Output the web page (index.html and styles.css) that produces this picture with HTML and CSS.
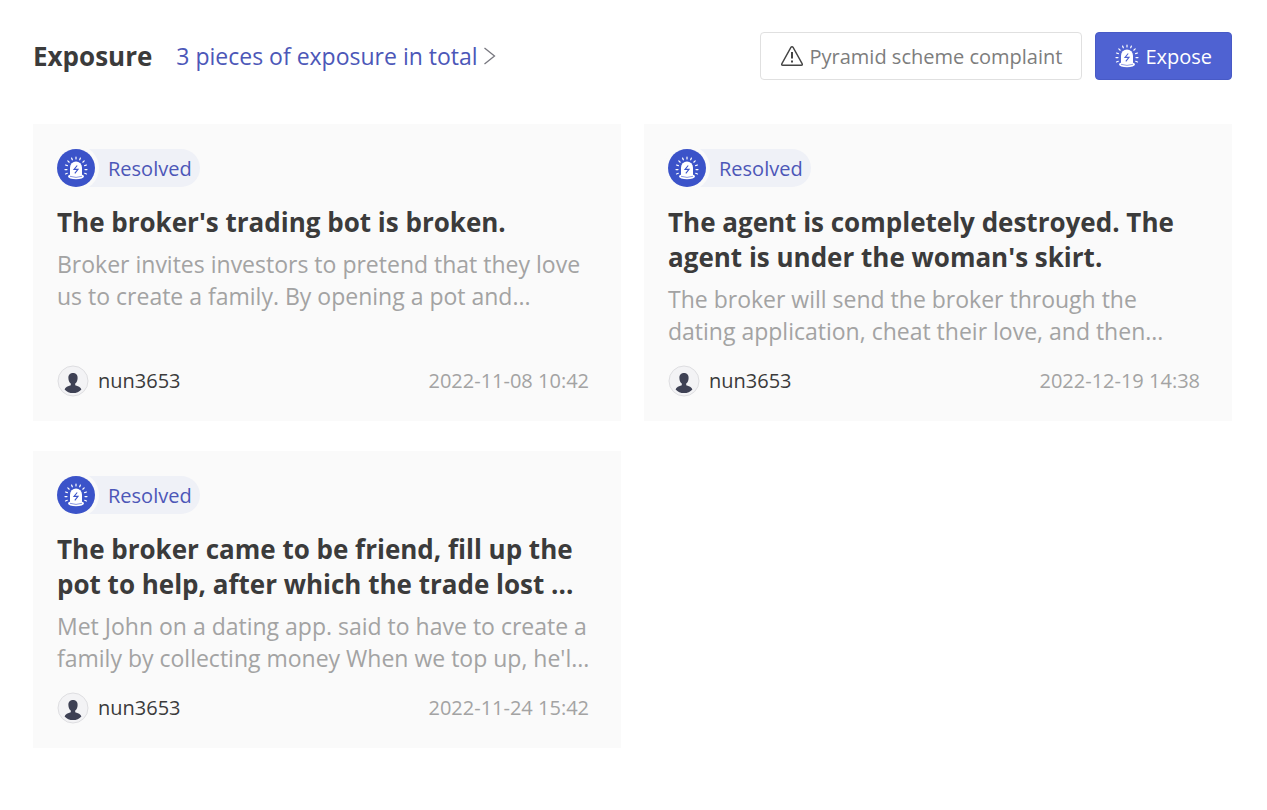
FILE: index.html
```
<!DOCTYPE html>
<html lang="en">
<head>
  <meta charset="UTF-8">
  <meta name="viewport" content="width=device-width, initial-scale=1">
  <title>Exposure</title>
  <link rel="stylesheet" href="styles.css">
</head>
<body>
  <svg class="sprite" aria-hidden="true">
    <symbol id="siren" viewBox="0 0 24 24">
      <path d="M6 19.5V11.500a6 6 0 0 1 12 0v8z" fill="currentColor"/>
      <ellipse cx="12" cy="20.500" rx="8" ry="2.700" fill="currentColor"/>
      <path d="M6 20.300q6 2.200 12 0" fill="none" stroke="var(--siren-bg)" stroke-width=".6"/>
      <path d="M13.200 9.500l-3.200 3.900h4l-3.200 3.900" fill="none" stroke="var(--siren-bg)" stroke-width="1.100"/>
      <path d="M12 1v2M7.600 2l.7 1.800M16.400 2l-.7 1.800M3.800 4.900l1.400 1.300M20.200 4.900l-1.400 1.300M1.500 9l1.900.6M22.500 9l-1.900.6M1 13.600h2M23 13.600h-2M1.500 18l1.800-.7M22.500 18l-1.800-.7" fill="none" stroke="currentColor" stroke-width="1.200" stroke-linecap="round"/>
    </symbol>
    <symbol id="person" viewBox="0 0 32 32">
      <circle cx="16" cy="16" r="15" fill="#f3f3f5" stroke="#dedee1"/>
      <path d="M16 8c3.100 0 4.800 2.200 4.600 5.200-.1 2.300-1 4.300-2.400 5.400v1.600c2.800.9 5.600 1.800 6.200 4.200-2.100 2.400-5 3.600-8.400 3.600s-6.300-1.200-8.400-3.600c.6-2.400 3.400-3.300 6.200-4.200v-1.600c-1.400-1.100-2.300-3.100-2.400-5.400C11.200 10.200 12.900 8 16 8z" fill="#3e4154"/>
    </symbol>
  </svg>

  <section class="exposure">
    <header class="top">
      <h1>Exposure</h1>
      <a class="total" href="#">3 pieces of exposure in total
        <svg width="13" height="20" viewBox="0 0 13 20" fill="none" stroke="#77777f" stroke-width="1.3"><path d="M1.500 2l10 8-10 8"/></svg>
      </a>
      <div class="actions">
        <button class="btn">
          <svg width="24" height="22" viewBox="0 0 24 22" fill="none" stroke="#444" stroke-width="1.4" stroke-linejoin="round"><path d="M12 1.700q.7 0 1.100.7l9 16.200q.8 1.700-.9 1.700H2.800q-1.700 0-.9-1.700l9-16.200q.4-.7 1.100-.7z"/><path d="M12 7v6.500M12 15.500v2" stroke-width="2"/></svg>
          Pyramid scheme complaint
        </button>
        <button class="btn primary">
          <svg width="24" height="24"><use href="#siren"/></svg>
          Expose
        </button>
      </div>
    </header>

    <div class="cards">
      <article class="card">
        <div class="badge"><span class="dot"><svg width="24" height="24"><use href="#siren"/></svg></span>Resolved</div>
        <h2>The broker's trading bot is broken.</h2>
        <p>Broker invites investors to pretend that they love us to create a family. By opening a pot and...</p>
        <footer>
          <svg width="32" height="32"><use href="#person"/></svg>
          <span class="user">nun3653</span>
          <time>2022-11-08 10:42</time>
        </footer>
      </article>

      <article class="card">
        <div class="badge"><span class="dot"><svg width="24" height="24"><use href="#siren"/></svg></span>Resolved</div>
        <h2>The agent is completely destroyed. The agent is under the woman's skirt.</h2>
        <p>The broker will send the broker through the dating application, cheat their love, and then...</p>
        <footer>
          <svg width="32" height="32"><use href="#person"/></svg>
          <span class="user">nun3653</span>
          <time>2022-12-19 14:38</time>
        </footer>
      </article>

      <article class="card">
        <div class="badge"><span class="dot"><svg width="24" height="24"><use href="#siren"/></svg></span>Resolved</div>
        <h2>The broker came to be friend, fill up the pot to help, after which the trade lost ...</h2>
        <p>Met John on a dating app. said to have to create a family by collecting money When we top up, he'l...</p>
        <footer>
          <svg width="32" height="32"><use href="#person"/></svg>
          <span class="user">nun3653</span>
          <time>2022-11-24 15:42</time>
        </footer>
      </article>
    </div>
  </section>
</body>
</html>
```
FILE: styles.css
```
* {
  box-sizing: border-box;
}
body {
  margin: 0;
  background: #fff;
  color: #3b3b3b;
  font-family: "Open Sans", "Noto Sans", sans-serif;
}
.sprite {
  display: none;
}
.exposure {
  padding: 32px 35px 32px 33px;
}
.top {
  display: flex;
  align-items: center;
  height: 48px;
  margin-bottom: 44px;
}
h1 {
  margin: 0 24px 0 0;
  font-size: 26px;
  line-height: 48px;
}
.total {
  display: flex;
  align-items: center;
  gap: 5px;
  color: #4c57b8;
  font-size: 23px;
  text-decoration: none;
}
.actions {
  display: flex;
  gap: 13px;
  margin-left: auto;
}
.btn {
  display: flex;
  align-items: center;
  gap: 6px;
  height: 48px;
  padding: 0 19px;
  border: 1px solid #e0e0e0;
  border-radius: 4px;
  background: #fff;
  color: #7d7d7d;
  font-family: inherit;
  font-size: 20px;
  cursor: pointer;
}
.btn.primary {
  --siren-bg: #4f62d2;
  border-color: #485ac6;
  background: #4f62d2;
  color: #fff;
}
.cards {
  display: grid;
  grid-template-columns: 1fr 1fr;
  gap: 30px 23px;
}
.card {
  display: flex;
  flex-direction: column;
  align-items: flex-start;
  min-height: 297px;
  padding: 25px 24px 24px;
  background: #fafafa;
}
.badge {
  display: flex;
  align-items: center;
  height: 38px;
  padding-right: 8px;
  border-radius: 19px;
  background: #eff1f7;
  color: #4c57b8;
  font-size: 20px;
}
.dot {
  --siren-bg: #3b53c9;
  display: flex;
  align-items: center;
  justify-content: center;
  width: 38px;
  height: 38px;
  margin-right: 13px;
  border-radius: 50%;
  background: #3b53c9;
  box-shadow: 0 0 0 4px #fafafa;
  color: #fff;
}
h2 {
  margin: 18px 0 8px;
  font-size: 26px;
  line-height: 35px;
}
p {
  margin: 0;
  color: #a3a3a3;
  font-size: 23px;
  line-height: 32px;
}
footer {
  display: flex;
  align-items: center;
  align-self: stretch;
  margin-top: auto;
  padding-right: 8px;
  font-size: 20px;
  line-height: 32px;
}
.user {
  margin-left: 9px;
}
time {
  margin-left: auto;
  color: #a3a3a3;
}
```
